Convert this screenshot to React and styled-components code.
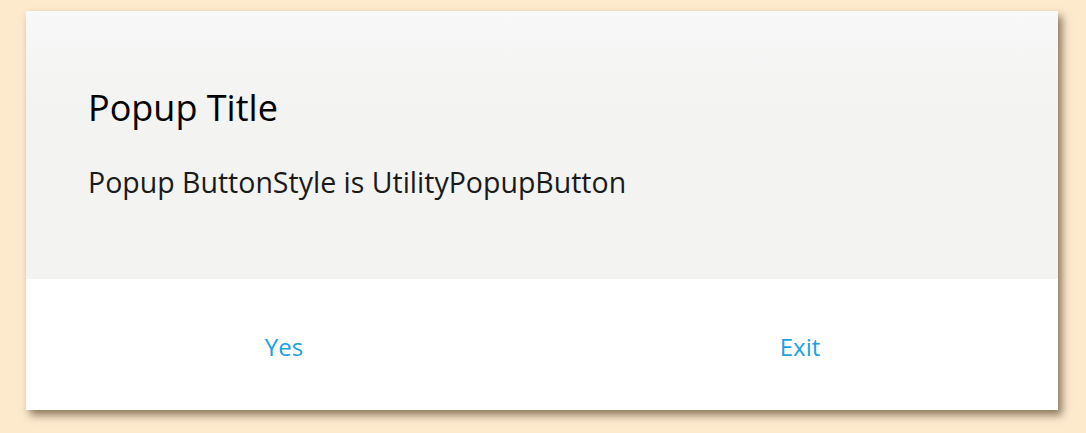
import React from 'react';
import styled, {createGlobalStyle} from 'styled-components';

const GlobalStyle = createGlobalStyle`
  html, body {
    margin: 0;
    padding: 0;
    background: #fde9cc;
  }
  body {
    font-family: "Open Sans", "Noto Sans", sans-serif;
  }
`;

const Page = styled.div`
  width: 1086px;
  height: 433px;
  padding: 11px 0 0 26px;
  box-sizing: border-box;
`;

const Popup = styled.div`
  width: 1032px;
  height: 399px;
  display: flex;
  flex-direction: column;
  background: #fff;
  box-shadow: 4px 5px 8px rgba(60, 45, 20, 0.6);
`;

const Content = styled.div`
  height: 268px;
  box-sizing: border-box;
  padding: 72px 62px 0 62px;
  background: linear-gradient(to bottom, #f8f8f8 0px, #f3f3f2 90px, #f3f3f2 100%);
`;

const Title = styled.div`
  font-size: 36px;
  line-height: 50px;
  color: #000;
`;

const Message = styled.div`
  margin-top: 29px;
  font-size: 28.5px;
  line-height: 40px;
  color: #1a1a1a;
`;

const ButtonRow = styled.div`
  flex: 1;
  display: flex;
`;

const PopupButton = styled.button`
  flex: 1;
  border: none;
  background: transparent;
  font-family: inherit;
  font-size: 24px;
  color: #1ba1e2;
  padding: 3px 0 0 0;
  cursor: pointer;
`;

function App() {
  return (
    <>
      <GlobalStyle />
      <Page>
        <Popup>
          <Content>
            <Title>Popup Title</Title>
            <Message>Popup ButtonStyle is UtilityPopupButton</Message>
          </Content>
          <ButtonRow>
            <PopupButton>Yes</PopupButton>
            <PopupButton>Exit</PopupButton>
          </ButtonRow>
        </Popup>
      </Page>
    </>
  );
}

export default App;
